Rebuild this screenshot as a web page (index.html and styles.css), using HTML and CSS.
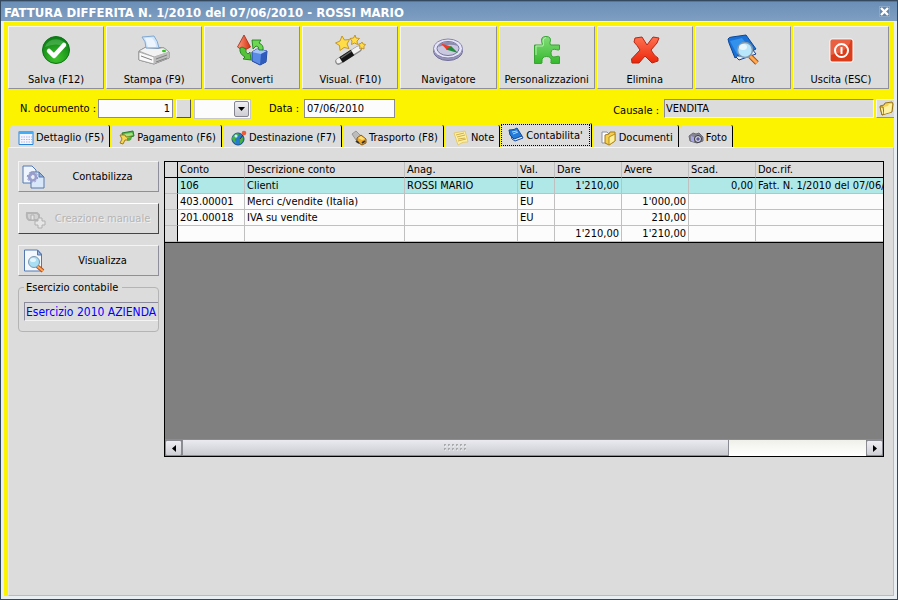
FILE: index.html
```html
<!DOCTYPE html>
<html lang="it">
<head>
    <meta charset="UTF-8">
    <meta name="viewport" content="width=device-width, initial-scale=1.0">
    <title>Fattura differita</title>
    <link rel="stylesheet" href="styles.css">
</head>
<body>
    <div class="window">
        <header class="titlebar">
            <h1>FATTURA DIFFERITA N. 1/2010 del 07/06/2010 - ROSSI MARIO</h1>
            <button class="close" aria-label="Chiudi">
                <svg width="9" height="9" viewBox="0 0 9 9"><path d="M1 1l7 7M8 1l-7 7" stroke="#fff" stroke-width="2.400"/></svg>
            </button>
        </header>

        <main class="content">
            <nav class="toolbar">
                <button class="tool">
                    <svg width="32" height="32" viewBox="0 0 32 32">
                        <defs><radialGradient id="green" cx=".5" cy=".8" r=".8"><stop offset="0" stop-color="#3fc52c"/><stop offset="1" stop-color="#087a12"/></radialGradient></defs>
                        <circle cx="16" cy="16" r="13.500" fill="url(#green)" stroke="#0b7416"/>
                        <path d="M5 13a11.500 11 0 0 1 22 0q-11-5-22 0z" fill="#7bd080" opacity=".4"/>
                        <path d="M9 17l5 5 10-11" fill="none" stroke="#fff" stroke-width="4.500" stroke-linecap="round" stroke-linejoin="round"/>
                    </svg>
                    <span>Salva (F12)</span>
                </button>
                <button class="tool">
                    <svg width="32" height="32" viewBox="0 0 32 32">
                        <path d="M1 17l7-4 18 1 5 4v6l-15 6-15-4z" fill="#d8d8d8" stroke="#777"/>
                        <path d="M1 17l7-4 18 1 5 4-15 5z" fill="#f3f3f3" stroke="#999" stroke-width=".7"/>
                        <path d="M1 18l15 5v7l-15-4z" fill="#fafafa" stroke="#999" stroke-width=".7"/>
                        <path d="M16 23l15-5v6l-15 6z" fill="#bdbdbd"/>
                        <path d="M18 25l11-4M18 28l11-4M3 22l11 4" stroke="#808080"/>
                        <path d="M7 14l13 1 4-1-3-1-13 0z" fill="#888"/>
                        <path d="M8 14Q8 7 4 3l12-1q4 5 5 12z" fill="#cfe5fb" stroke="#7fa8d2"/>
                        <path d="M7 4l7 0q4 4 4 9l-8 0z" fill="#fff" opacity=".6"/>
                        <ellipse cx="26" cy="17" rx="2" ry="1.200" fill="#32c21d"/>
                    </svg>
                    <span>Stampa (F9)</span>
                </button>
                <button class="tool">
                    <svg width="32" height="32" viewBox="0 0 32 32">
                        <defs><linearGradient id="cone"><stop stop-color="#ff9b7a"/><stop offset="1" stop-color="#d62d10"/></linearGradient></defs>
                        <path d="M8 1L1.500 13q6 5 13 0z" fill="url(#cone)" stroke="#a52714" stroke-width=".8"/>
                        <path d="M16 18l5-3 10 2-1 11-6 3-8-4z" fill="#5a8be4" stroke="#1e4098"/>
                        <path d="M16 18l5-3 10 2-6 3z" fill="#a3c4fa"/><path d="M25 20l6-3-1 11-6 3z" fill="#2f5cbc"/>
                        <path d="M6 13l4 2q-1 4 2 5l2-2 1 8-8-1 2-2q-6-3-5-9z" fill="#55c33a" stroke="#137412" stroke-width=".8"/>
                        <path d="M16 6h9l-2 3q5 2 4 7h-4q0-4-3-4l-3 3z" fill="#6bd850" stroke="#137412" stroke-width=".8"/>
                    </svg>
                    <span>Converti</span>
                </button>
                <button class="tool">
                    <svg width="32" height="32" viewBox="0 0 32 32">
                        <path d="M4.500 27.500l20-12.500" stroke="#8a8a8a" stroke-width="6.500" stroke-linecap="round"/>
                        <path d="M4.500 27l20-12.500" stroke="#f2f2f2" stroke-width="4.500" stroke-linecap="round"/>
                        <path d="M7 26l11.500-7.500" stroke="#151515" stroke-width="6.500"/><path d="M7 24l10.500-7" stroke="#666" stroke-width="1.500"/>
                        <g fill="#ffdc48" stroke="#b78514" stroke-width=".8">
                            <path d="M8 2l2.500 4 5-.5-2.500 4.500 2 4.500-5-1-4 3-.5-5-4-2.500 4.500-2z"/>
                            <path d="M21 1l1 3 3.500.5-2.500 2.500.5 3.500-3-1.500-3 1.500.5-3.500-2-2.500 3.500-.5z"/>
                            <path d="M28 8l1 2 2.500.5-1.500 2 0 2.500-2.500-1-2 .5.500-2.500-1.500-2 2.500-.5z"/>
                        </g>
                    </svg>
                    <span>Visual. (F10)</span>
                </button>
                <button class="tool">
                    <svg width="32" height="32" viewBox="0 0 32 32">
                        <ellipse cx="16" cy="17" rx="14.500" ry="9.500" fill="#9694bb" stroke="#716f98"/>
                        <ellipse cx="16" cy="14.500" rx="14.500" ry="9.500" fill="#e6e5f8" stroke="#8785ad"/>
                        <ellipse cx="16" cy="14.500" rx="11" ry="7" fill="#c9c8e0" stroke="#77759d"/>
                        <path d="M6 13q2-5 10-5 7 0 10 4-9-3-20 1z" fill="#8d8baf"/>
                        <path d="M9 9.500l10 3-4 3.500z" fill="#ef3b25"/><path d="M14 15.500l5-3.500 7 7z" fill="#248b3e"/>
                    </svg>
                    <span>Navigatore</span>
                </button>
                <button class="tool">
                    <svg width="32" height="32" viewBox="0 0 32 32">
                        <defs><linearGradient id="puzzle" x2="0" y2="1"><stop stop-color="#82dd78"/><stop offset="1" stop-color="#35b82e"/></linearGradient></defs>
                        <path d="M3.500 11h7q1.500 0 .5-2-2-6.500 4-6.500 6 0 4 6-.5 2.500 1 2.500h8.500v4.500q-1 1-3 .2-5-1.700-5.500 3-.2 5.300 5 4 2.500-1 3.500 0v6.800h-8q-1 0-.5-2 1-5-4.500-5-5 0-4.500 5 .5 2-1 2h-6.500z" fill="url(#puzzle)" stroke="#37a333"/>
                        <path d="M5 21v-9h7q1-2 0-5 0-3 3-3.500" fill="none" stroke="#baf0af"/>
                    </svg>
                    <span>Personalizzazioni</span>
                </button>
                <button class="tool">
                    <svg width="32" height="32" viewBox="0 0 32 32">
                        <defs><linearGradient id="red" x2="0" y2="1"><stop stop-color="#ff7150"/><stop offset="1" stop-color="#eb260c"/></linearGradient></defs>
                        <path d="M6 4l7-1 5 8 6-8 6 1-2 5-6 7q3 6 7 8v3l-6 2-7-7-6 7-7 0-.5-4 8.500-9q-3-5-6-8z" fill="url(#red)" stroke="#b72612" stroke-linejoin="round"/>
                    </svg>
                    <span>Elimina</span>
                </button>
                <button class="tool">
                    <svg width="32" height="32" viewBox="0 0 32 32">
                        <path d="M2 5l5 16 5 5 17-6-4-5z" fill="#e9effa" stroke="#123e8e"/>
                        <path d="M1 5q1-2 4-2l14-2 10 14-15 7q-4-1-6 2L2 9z" fill="#1b72d6" stroke="#0b4899"/>
                        <path d="M3 7l12-3 9 12-14 4z" fill="#3291eb"/>
                        <path d="M23 22l7 7" stroke="#a84d12" stroke-width="5"/><path d="M23 22l7 7" stroke="#ffaa51" stroke-width="3"/>
                        <circle cx="18" cy="16" r="7.500" fill="#b8e6fa" stroke="#8298ac" stroke-width="1.500"/>
                        <ellipse cx="16" cy="13" rx="4" ry="3" fill="#fff" opacity=".7"/>
                    </svg>
                    <span>Altro</span>
                </button>
                <button class="tool">
                    <svg width="32" height="32" viewBox="0 0 32 32">
                        <rect x="5" y="5" width="23" height="23" rx="2" fill="#db3c19" stroke="#fff"/>
                        <path d="M6 6h20q-3 12-20 15z" fill="#f0785b" opacity=".6"/>
                        <circle cx="16.500" cy="16.500" r="6.500" fill="none" stroke="#fff" stroke-width="2"/><path d="M16.500 13v7" stroke="#fff" stroke-width="2"/>
                    </svg>
                    <span>Uscita (ESC)</span>
                </button>
            </nav>

            <form class="fields">
                <label class="lbl-number" for="numero">N. documento :</label>
                <input class="number" id="numero" type="text" value="1">
                <button class="small-btn" type="button" aria-label="Numerazione"></button>
                <div class="select-box">
                    <select class="serie" aria-label="Serie"><option></option></select>
                    <span class="drop"><svg width="7" height="4" viewBox="0 0 7 4"><path d="M0 0h7L3.500 4z"/></svg></span>
                </div>
                <label class="lbl-date" for="data">Data :</label>
                <input class="date" id="data" type="text" value="07/06/2010">
                <label class="lbl-causale" for="causale">Causale :</label>
                <input class="causale" id="causale" type="text" value="VENDITA" readonly>
                <button class="folder-btn" type="button" aria-label="Cerca causale">
                    <svg width="16" height="16" viewBox="0 0 16 16"><path d="M2 5l4-1 1-2 7-1 1 2-1 8-10 3z" fill="#f5d450" stroke="#987314"/><path d="M2 6l3 0 1 7-2 1z" fill="#fff2a0" stroke="#987314"/><path d="M6 6l4-1 1-2 3 0-1 8-7 2z" fill="#fff3a3"/></svg>
                </button>
            </form>

            <nav class="tabs">
                <button class="tab">
                    <svg width="16" height="16" viewBox="0 0 16 16"><path d="M1 1.500h14v13H1z" fill="#f4f5ff" stroke="#2684d8"/><path d="M1 1h14v3H1z" fill="#45acf6"/><path d="M3 7h11M3 9.500h11M3 12h11" stroke="#b4b6df" stroke-dasharray="1.500 1"/></svg>
                    Dettaglio (F5)
                </button>
                <button class="tab">
                    <svg width="16" height="16" viewBox="0 0 16 16"><path d="M3 3l11-2 1 5-11 3z" fill="#54b846" stroke="#23802a"/><path d="M5 4l8-1 1 2-8 2z" fill="#a8e084"/><path d="M1 5l5 0 1 2 5 0-1 3-5 0-2 4-3-1 2-4z" fill="#f5d956" stroke="#a17b18"/><path d="M8 8l5-1-1 3-4 1z" fill="#4eae3a"/></svg>
                    Pagamento (F6)
                </button>
                <button class="tab">
                    <svg width="16" height="16" viewBox="0 0 16 16"><circle cx="7" cy="9" r="6" fill="#247ccb" stroke="#17508c"/><path d="M2 6q4-4 6-2l-2 4-2 1 1 4q-4-2-4-5zM9 8l3-1q1 4-3 7z" fill="#43b33c"/><circle cx="5" cy="6" r="1.500" fill="#ccefff"/><path d="M12 5l-3 4" stroke="#333"/><circle cx="13" cy="3" r="2.300" fill="#ee5c37"/></svg>
                    Destinazione (F7)
                </button>
                <button class="tab">
                    <svg width="16" height="16" viewBox="0 0 16 16"><path d="M1 4l4-3 5 5-5 4z" fill="#bcbcbc" stroke="#999"/><path d="M6 8l4-3 5 4v4l-4 2-5-3z" fill="#f0a927" stroke="#8b5913"/><path d="M7 8l3-2 4 3-3 1z" fill="#ffe074"/><path d="M5 11l3 2M11 13l3-2" stroke="#333" stroke-width="2"/></svg>
                    Trasporto (F8)
                </button>
                <button class="tab">
                    <svg width="16" height="16" viewBox="0 0 16 16"><path d="M1 3l11-2 3 11q-5-1-10 3z" fill="#fff0a0" stroke="#e5cb70"/><path d="M3 5l8-2M4 7l8-2M5 9l7-1M5 11l8-2" stroke="#d0b04d"/></svg>
                    Note
                </button>
                <button class="tab active">
                    <span class="focus">
                        <svg width="16" height="16" viewBox="0 0 16 16"><path d="M2 5l2 7 3 2 8-3-1-2z" fill="#dfeafa" stroke="#174c9b"/><path d="M1 3q6 0 8-2l5 8-8 3-4-4z" fill="#237bd9" stroke="#0f4b9b"/><path d="M4 5l5-1M5 7l5-2" stroke="#b0d9ff"/></svg>
                        Contabilita'
                    </span>
                </button>
                <button class="tab">
                    <svg width="16" height="16" viewBox="0 0 16 16"><path d="M1 2h5l2 2v9H1z" fill="#fff" stroke="#8b91a8"/><path d="M4 5l4-1 1-2 5 0v9l-6 4-4-2z" fill="#f4cf4d" stroke="#a47a17"/><path d="M8 7l6-3v7l-6 4z" fill="#fff09a" stroke="#b58c23"/></svg>
                    Documenti
                </button>
                <button class="tab">
                    <svg width="16" height="16" viewBox="0 0 16 16"><path d="M1 6l4-3 3 1 3-1 4 4v4l-6 2-7-2z" fill="#858593" stroke="#6c6c78"/><path d="M3 6l3 1v5l-3-1z" fill="#aaa6ee"/><circle cx="10" cy="9" r="3.500" fill="#d9d9e4" stroke="#33333d"/><circle cx="10" cy="9" r="1.700" fill="#5a579b"/></svg>
                    Foto
                </button>
            </nav>

            <section class="panel">
                <aside class="side">
                    <button class="action">
                        <svg width="24" height="24" viewBox="0 0 24 24"><path d="M1 1h9l4 4v13H1z" fill="#eef5ff" stroke="#5478ae"/><path d="M9 7h8l5 5v11H9z" fill="#d9e7fb" stroke="#5478ae"/><path d="M17 7v5h5z" fill="#8faed7" stroke="#5478ae"/><circle cx="10.500" cy="12" r="3.500" fill="none" stroke="#9a9dca" stroke-width="2.500"/><circle cx="10.500" cy="12" r="5.200" fill="none" stroke="#8b8fc0" stroke-dasharray="2 2"/><circle cx="10.500" cy="12" r="1.500" fill="#eee"/></svg>
                        <span>Contabilizza</span>
                    </button>
                    <button class="action disabled" disabled>
                        <svg width="24" height="24" viewBox="0 0 24 24"><path d="M5 6h10l2 2v5H7q-3-2-2-7z" fill="#d2d2d2" stroke="#b5b5b5" stroke-width="2"/><path d="M9 8h3v5H9zM13 14h3v-3h4v3h3v4h-3v3h-4v-3h-3z" fill="#e6e6e6" stroke="#b0b0b0"/></svg>
                        <span>Creazione manuale</span>
                    </button>
                    <button class="action">
                        <svg width="24" height="24" viewBox="0 0 24 24"><path d="M2.500 1h13l4 4v17H2.500z" fill="#f3f8ff" stroke="#5478ae"/><path d="M15.500 1v5h4z" fill="#9ab7dd" stroke="#5478ae"/><path d="M15 17l6 5" stroke="#af501d" stroke-width="4"/><path d="M15 17l6 5" stroke="#ffa455" stroke-width="2"/><circle cx="12" cy="13" r="5.500" fill="#a9def3" stroke="#7c99af"/><ellipse cx="11" cy="11" rx="3" ry="2" fill="#fff" opacity=".7"/></svg>
                        <span>Visualizza</span>
                    </button>
                    <fieldset class="group">
                        <legend>Esercizio contabile</legend>
                        <input class="esercizio" type="text" value="Esercizio 2010 AZIENDA" aria-label="Esercizio contabile" readonly>
                    </fieldset>
                </aside>

                <div class="grid">
                    <table>
                        <colgroup>
                            <col class="c-mark"><col class="c-conto"><col class="c-descr"><col class="c-anag"><col class="c-val"><col class="c-num"><col class="c-num"><col class="c-num"><col>
                        </colgroup>
                        <thead>
                            <tr><th></th><th>Conto</th><th>Descrizione conto</th><th>Anag.</th><th>Val.</th><th>Dare</th><th>Avere</th><th>Scad.</th><th>Doc.rif.</th></tr>
                        </thead>
                        <tbody>
                            <tr class="selected"><td></td><td>106</td><td>Clienti</td><td>ROSSI MARIO</td><td>EU</td><td class="num">1'210,00</td><td></td><td class="num">0,00</td><td>Fatt. N. 1/2010 del 07/06/2010</td></tr>
                            <tr><td></td><td>403.00001</td><td>Merci c/vendite (Italia)</td><td></td><td>EU</td><td></td><td class="num">1'000,00</td><td></td><td></td></tr>
                            <tr><td></td><td>201.00018</td><td>IVA su vendite</td><td></td><td>EU</td><td></td><td class="num">210,00</td><td></td><td></td></tr>
                            <tr><td></td><td></td><td></td><td></td><td></td><td class="num">1'210,00</td><td class="num">1'210,00</td><td></td><td></td></tr>
                        </tbody>
                    </table>
                    <div class="scrollbar">
                        <button class="arrow" aria-label="Scorri a sinistra"><svg width="4" height="7" viewBox="0 0 4 7"><path d="M4 0v7L0 3.500z"/></svg></button>
                        <div class="track">
                            <div class="thumb">
                                <svg width="23" height="7" viewBox="0 0 23 7"><path d="M0 1h23M0 5h23" stroke="#aaa" stroke-width="2" stroke-dasharray="2 2"/><path d="M1 2h22M1 6h22" stroke="#fff" stroke-dasharray="1 3"/></svg>
                            </div>
                        </div>
                        <button class="arrow" aria-label="Scorri a destra"><svg width="4" height="7" viewBox="0 0 4 7"><path d="M0 0v7l4-3.500z"/></svg></button>
                    </div>
                </div>
            </section>
        </main>
    </div>
</body>
</html>
```

FILE: styles.css
```css
* {
    margin: 0;
    padding: 0;
    box-sizing: border-box;
}

body,
button,
input,
select {
    font-family: Tahoma, "DejaVu Sans Condensed", "DejaVu Sans", sans-serif;
    font-size: 11px;
    color: #000;
}

button,
input,
select {
    border-radius: 0;
    appearance: none;
}

svg {
    flex: none;
    display: block;
}

.window {
    display: flex;
    flex-direction: column;
    height: 100vh;
    border: 1px solid #34495e;
    background: #e8eef2;
}

.titlebar {
    display: flex;
    align-items: center;
    justify-content: space-between;
    height: 20px;
    padding: 2px 7px 0 3px;
    border-top: 1px solid #54779b;
    background: linear-gradient(#6b8fb7, #7f9fc2);
}

.titlebar h1 {
    font-size: 13px;
    line-height: 16px;
    color: #fff;
    white-space: nowrap;
}

.close {
    display: flex;
    align-items: center;
    justify-content: center;
    width: 11px;
    height: 11px;
    margin-bottom: 2px;
    border: 1px solid #8ba7c6;
    background: #6586aa;
}

.content {
    flex: 1;
    min-height: 0;
    display: flex;
    flex-direction: column;
    margin: 1px 3px 3px;
    padding-left: 4px;
    background: #fcf300;
}

/* top buttons */
.toolbar {
    display: flex;
    gap: 2px;
    padding: 4px 5px 0 0;
}

.tool {
    flex: 1 1 0;
    min-width: 0;
    height: 63px;
    display: flex;
    flex-direction: column;
    align-items: center;
    padding-top: 7px;
    gap: 7px;
    border: 1px solid;
    border-color: #f4f4f4 #8f8f9b #8f8f9b #f4f4f4;
    background: #dcdcdc;
    white-space: nowrap;
}

.tool span {
    line-height: 14px;
}

/* document header */
.fields {
    display: flex;
    align-items: center;
    height: 19px;
    margin-top: 10px;
    white-space: nowrap;
}

.fields input {
    height: 19px;
    padding: 0 2px;
    border: 1px solid #8b8b9b;
    background: #fcfcfc;
}

.lbl-number {
    width: 90px;
    padding-left: 12px;
}

.fields .number {
    width: 75px;
    text-align: right;
}

.small-btn {
    width: 15px;
    height: 19px;
    margin: 0 3px;
    border: 1px solid;
    border-color: #fff #555 #555 #fff;
    background: #dcdcdc;
}

.select-box {
    position: relative;
    width: 57px;
    height: 20px;
}

.serie {
    width: 100%;
    height: 100%;
    border: 1px solid #c8c8c8;
    background: #fcfcfc;
}

.drop {
    position: absolute;
    top: 2px;
    right: 2px;
    bottom: 2px;
    width: 15px;
    display: flex;
    align-items: center;
    justify-content: center;
    border: 1px solid #85858f;
    border-radius: 2px;
    background: linear-gradient(#f0f0f4, #cdcdd3);
    pointer-events: none;
}

.lbl-date {
    width: 53px;
    padding-left: 18px;
}

.fields .date {
    width: 91px;
}

.lbl-causale {
    margin-left: auto;
    padding-top: 3px;
}

.fields .causale {
    width: 210px;
    margin: 0 2px 0 5px;
    padding: 0 0 1px 1px;
    border-color: #8b8b9b #f4f4f4 #f4f4f4 #8b8b9b;
    background: #dcdcdc;
}

.folder-btn {
    width: 18px;
    height: 19px;
    padding: 1px 0 0 1px;
    border: 1px solid;
    border-color: #f4f4f4 #dcdcdc #8f8f9b #f4f4f4;
    border-right: 0;
    background: #dcdcdc;
    overflow: hidden;
}

/* tabs */
.tabs {
    display: flex;
    align-items: flex-end;
    height: 25px;
    margin-top: 4px;
    padding-left: 2px;
}

.tab {
    display: flex;
    align-items: center;
    gap: 2px;
    height: 22px;
    margin-right: 1px;
    padding: 3px 5px 0 8px;
    border: 0;
    border-right: 1px solid #000;
    border-radius: 4px 2px 0 0;
    background: #dcdcdc;
    white-space: nowrap;
}

.tab.active {
    height: 24px;
    padding: 0 1px 0 0;
}

.focus {
    display: flex;
    align-items: center;
    gap: 2px;
    height: 22px;
    padding: 0 6px;
    border: 1px dotted #000;
}

/* tab page */
.panel {
    flex: 1;
    min-height: 0;
    display: flex;
    align-items: flex-start;
    gap: 5px;
    padding: 13px 9px 10px 9px;
    border: 1px solid;
    border-color: #f4f4f4 #b9bcbf #b9bcbf #e8e8e8;
    background: #dcdcdc;
}

.side {
    flex: none;
    display: flex;
    flex-direction: column;
    gap: 11px;
    width: 141px;
}

.action {
    display: flex;
    align-items: center;
    height: 31px;
    padding: 0 3px;
    border: 1px solid;
    border-color: #f4f4f4 #8f8f9b #8f8f9b #f4f4f4;
    background: #dcdcdc;
}

.action span {
    flex: 1;
    padding-left: 4px;
    line-height: 14px;
    white-space: nowrap;
    text-align: center;
}

.action.disabled {
    border-color: #fff #444 #444 #fff;
    color: #b4b4b4;
    text-shadow: 1px 1px #f0f0f0;
}

.group {
    height: 51px;
    min-width: 0;
    margin-top: -6px;
    padding-left: 5px;
    border: 1px solid #b4b4b4;
    border-radius: 4px;
}

.group legend {
    padding: 0 4px 0 2px;
    line-height: 13px;
}

.esercizio {
    display: block;
    width: 100%;
    height: 19px;
    margin-top: 8px;
    padding-left: 1px;
    border: 1px solid;
    border-color: #8b8b9b transparent #f4f4f4 #8b8b9b;
    border-right: 0;
    background: #dcdcdc;
    font-size: 12px;
    color: #0000ff;
}

/* accounting grid */
.grid {
    flex: 1;
    min-width: 0;
    height: 296px;
    display: flex;
    flex-direction: column;
    justify-content: space-between;
    border: 1px solid #000;
    background: #808080;
}

table {
    width: 100%;
    table-layout: fixed;
    border-collapse: separate;
    border-spacing: 0;
    border-bottom: 1px solid #000;
}

.c-mark {
    width: 13px;
}

.c-conto,
.c-num {
    width: 67px;
}

.c-descr {
    width: 160px;
}

.c-anag {
    width: 113px;
}

.c-val {
    width: 37px;
}

th,
td {
    height: 16px;
    padding: 1px 2px 0;
    border-right: 1px solid #c0c0c0;
    border-bottom: 1px solid #c0c0c0;
    background: #fcfcfc;
    line-height: 14px;
    text-align: left;
    font-weight: normal;
    white-space: nowrap;
    overflow: hidden;
}

th {
    border-bottom-color: #000;
    background: #dcdcdc;
}

th:first-child,
td:first-child {
    border-right-color: #000;
    background: #dcdcdc;
}

th:last-child,
td:last-child {
    border-right: 0;
}

.selected td:not(:first-child) {
    background: #b0e8e8;
}

.num {
    text-align: right;
}

.scrollbar {
    display: flex;
    height: 17px;
    border-top: 1px solid #8b8b93;
}

.arrow {
    display: flex;
    align-items: center;
    justify-content: center;
    width: 17px;
    border: 1px solid #8b8b93;
    border-radius: 2px;
    background: linear-gradient(#eeeef3, #cfcfd6);
}

.track {
    flex: 1;
    background: linear-gradient(#f0f0ea, #fff);
}

.thumb {
    width: 80%;
    height: 100%;
    display: flex;
    align-items: center;
    justify-content: center;
    border: 1px solid #8b8b93;
    border-top: 0;
    background: linear-gradient(#eaeaf0, #cbcbd2);
}
```
